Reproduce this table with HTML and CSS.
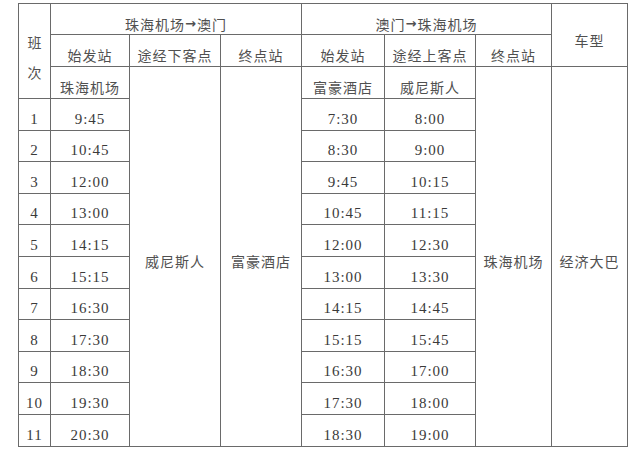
FILE: index.html
```html
<!DOCTYPE html>
<html lang="zh-CN">
<head>
<meta charset="utf-8">
<title>珠海机场—澳门 班次表</title>
<link rel="stylesheet" href="styles.css">
</head>
<body>
<div class="sheet">
  <div class="cell banci"><span>班</span><span>次</span></div>
  <div class="cell cn dir1">珠海机场<span class="arrow">→</span>澳门</div>
  <div class="cell cn dir2">澳门<span class="arrow">→</span>珠海机场</div>
  <div class="cell cn type">车型</div>

  <div class="cell tall col3 cn">威尼斯人</div>
  <div class="cell tall col4 cn">富豪酒店</div>
  <div class="cell tall col7 cn">珠海机场</div>
  <div class="cell tall col8 cn">经济大巴</div>

  <div class="cell cn">始发站</div>
  <div class="cell cn">途经下客点</div>
  <div class="cell cn">终点站</div>
  <div class="cell cn">始发站</div>
  <div class="cell cn">途经上客点</div>
  <div class="cell cn">终点站</div>

  <div class="cell cn">珠海机场</div>
  <div class="cell cn">富豪酒店</div>
  <div class="cell cn">威尼斯人</div>

  <div class="cell num">1</div><div class="cell num">9:45</div><div class="cell num">7:30</div><div class="cell num">8:00</div>
  <div class="cell num">2</div><div class="cell num">10:45</div><div class="cell num">8:30</div><div class="cell num">9:00</div>
  <div class="cell num">3</div><div class="cell num">12:00</div><div class="cell num">9:45</div><div class="cell num">10:15</div>
  <div class="cell num">4</div><div class="cell num">13:00</div><div class="cell num">10:45</div><div class="cell num">11:15</div>
  <div class="cell num">5</div><div class="cell num">14:15</div><div class="cell num">12:00</div><div class="cell num">12:30</div>
  <div class="cell num">6</div><div class="cell num">15:15</div><div class="cell num">13:00</div><div class="cell num">13:30</div>
  <div class="cell num">7</div><div class="cell num">16:30</div><div class="cell num">14:15</div><div class="cell num">14:45</div>
  <div class="cell num">8</div><div class="cell num">17:30</div><div class="cell num">15:15</div><div class="cell num">15:45</div>
  <div class="cell num">9</div><div class="cell num">18:30</div><div class="cell num">16:30</div><div class="cell num">17:00</div>
  <div class="cell num">10</div><div class="cell num">19:30</div><div class="cell num">17:30</div><div class="cell num">18:00</div>
  <div class="cell num">11</div><div class="cell num">20:30</div><div class="cell num">18:30</div><div class="cell num">19:00</div>
</div>
</body>
</html>
```
FILE: styles.css
```css
html, body {
  margin: 0;
  padding: 0;
  background: #ffffff;
}

.sheet {
  margin: 3px 0 0 18px;
  width: max-content;
  display: grid;
  grid-template-columns: 31px 78px 90px 80px 82px 90px 75px 75px;
  grid-template-rows: 30px 31px 31px 31px 30px 31px 30px 31px 31px 30px 31px 30px 31px 31px;
  gap: 1px;
  padding: 1px;
  background: #6a6a6a;
}

.cell {
  background: #ffffff;
  display: flex;
  align-items: center;
  justify-content: center;
  padding-top: 9px;
  box-sizing: border-box;
  white-space: nowrap;
}

.cn {
  font-family: "Noto Sans CJK SC", "Noto Sans", sans-serif;
  font-size: 14px;
  letter-spacing: 1px;
  color: #505050;
}

.num {
  font-family: "Liberation Serif", serif;
  font-size: 15px;
  letter-spacing: 1px;
  color: #3a3a3a;
}

.arrow {
  font-family: "DejaVu Sans", sans-serif;
  font-size: 13px;
  font-weight: bold;
  letter-spacing: 0;
  margin-right: 1px;
}

.banci {
  grid-column: 1;
  grid-row: 1 / 4;
  flex-direction: column;
  font-family: "Noto Sans CJK SC", "Noto Sans", sans-serif;
  font-size: 14px;
  line-height: 30px;
  color: #505050;
  padding-top: 11px;
}

.dir1 {
  grid-column: 2 / 5;
  grid-row: 1;
}

.dir2 {
  grid-column: 5 / 8;
  grid-row: 1;
}

.type {
  grid-column: 8;
  grid-row: 1 / 3;
}

.tall {
  grid-row: 3 / 15;
}

.col3 { grid-column: 3; }
.col4 { grid-column: 4; }
.col7 { grid-column: 7; }
.col8 { grid-column: 8; }
```
